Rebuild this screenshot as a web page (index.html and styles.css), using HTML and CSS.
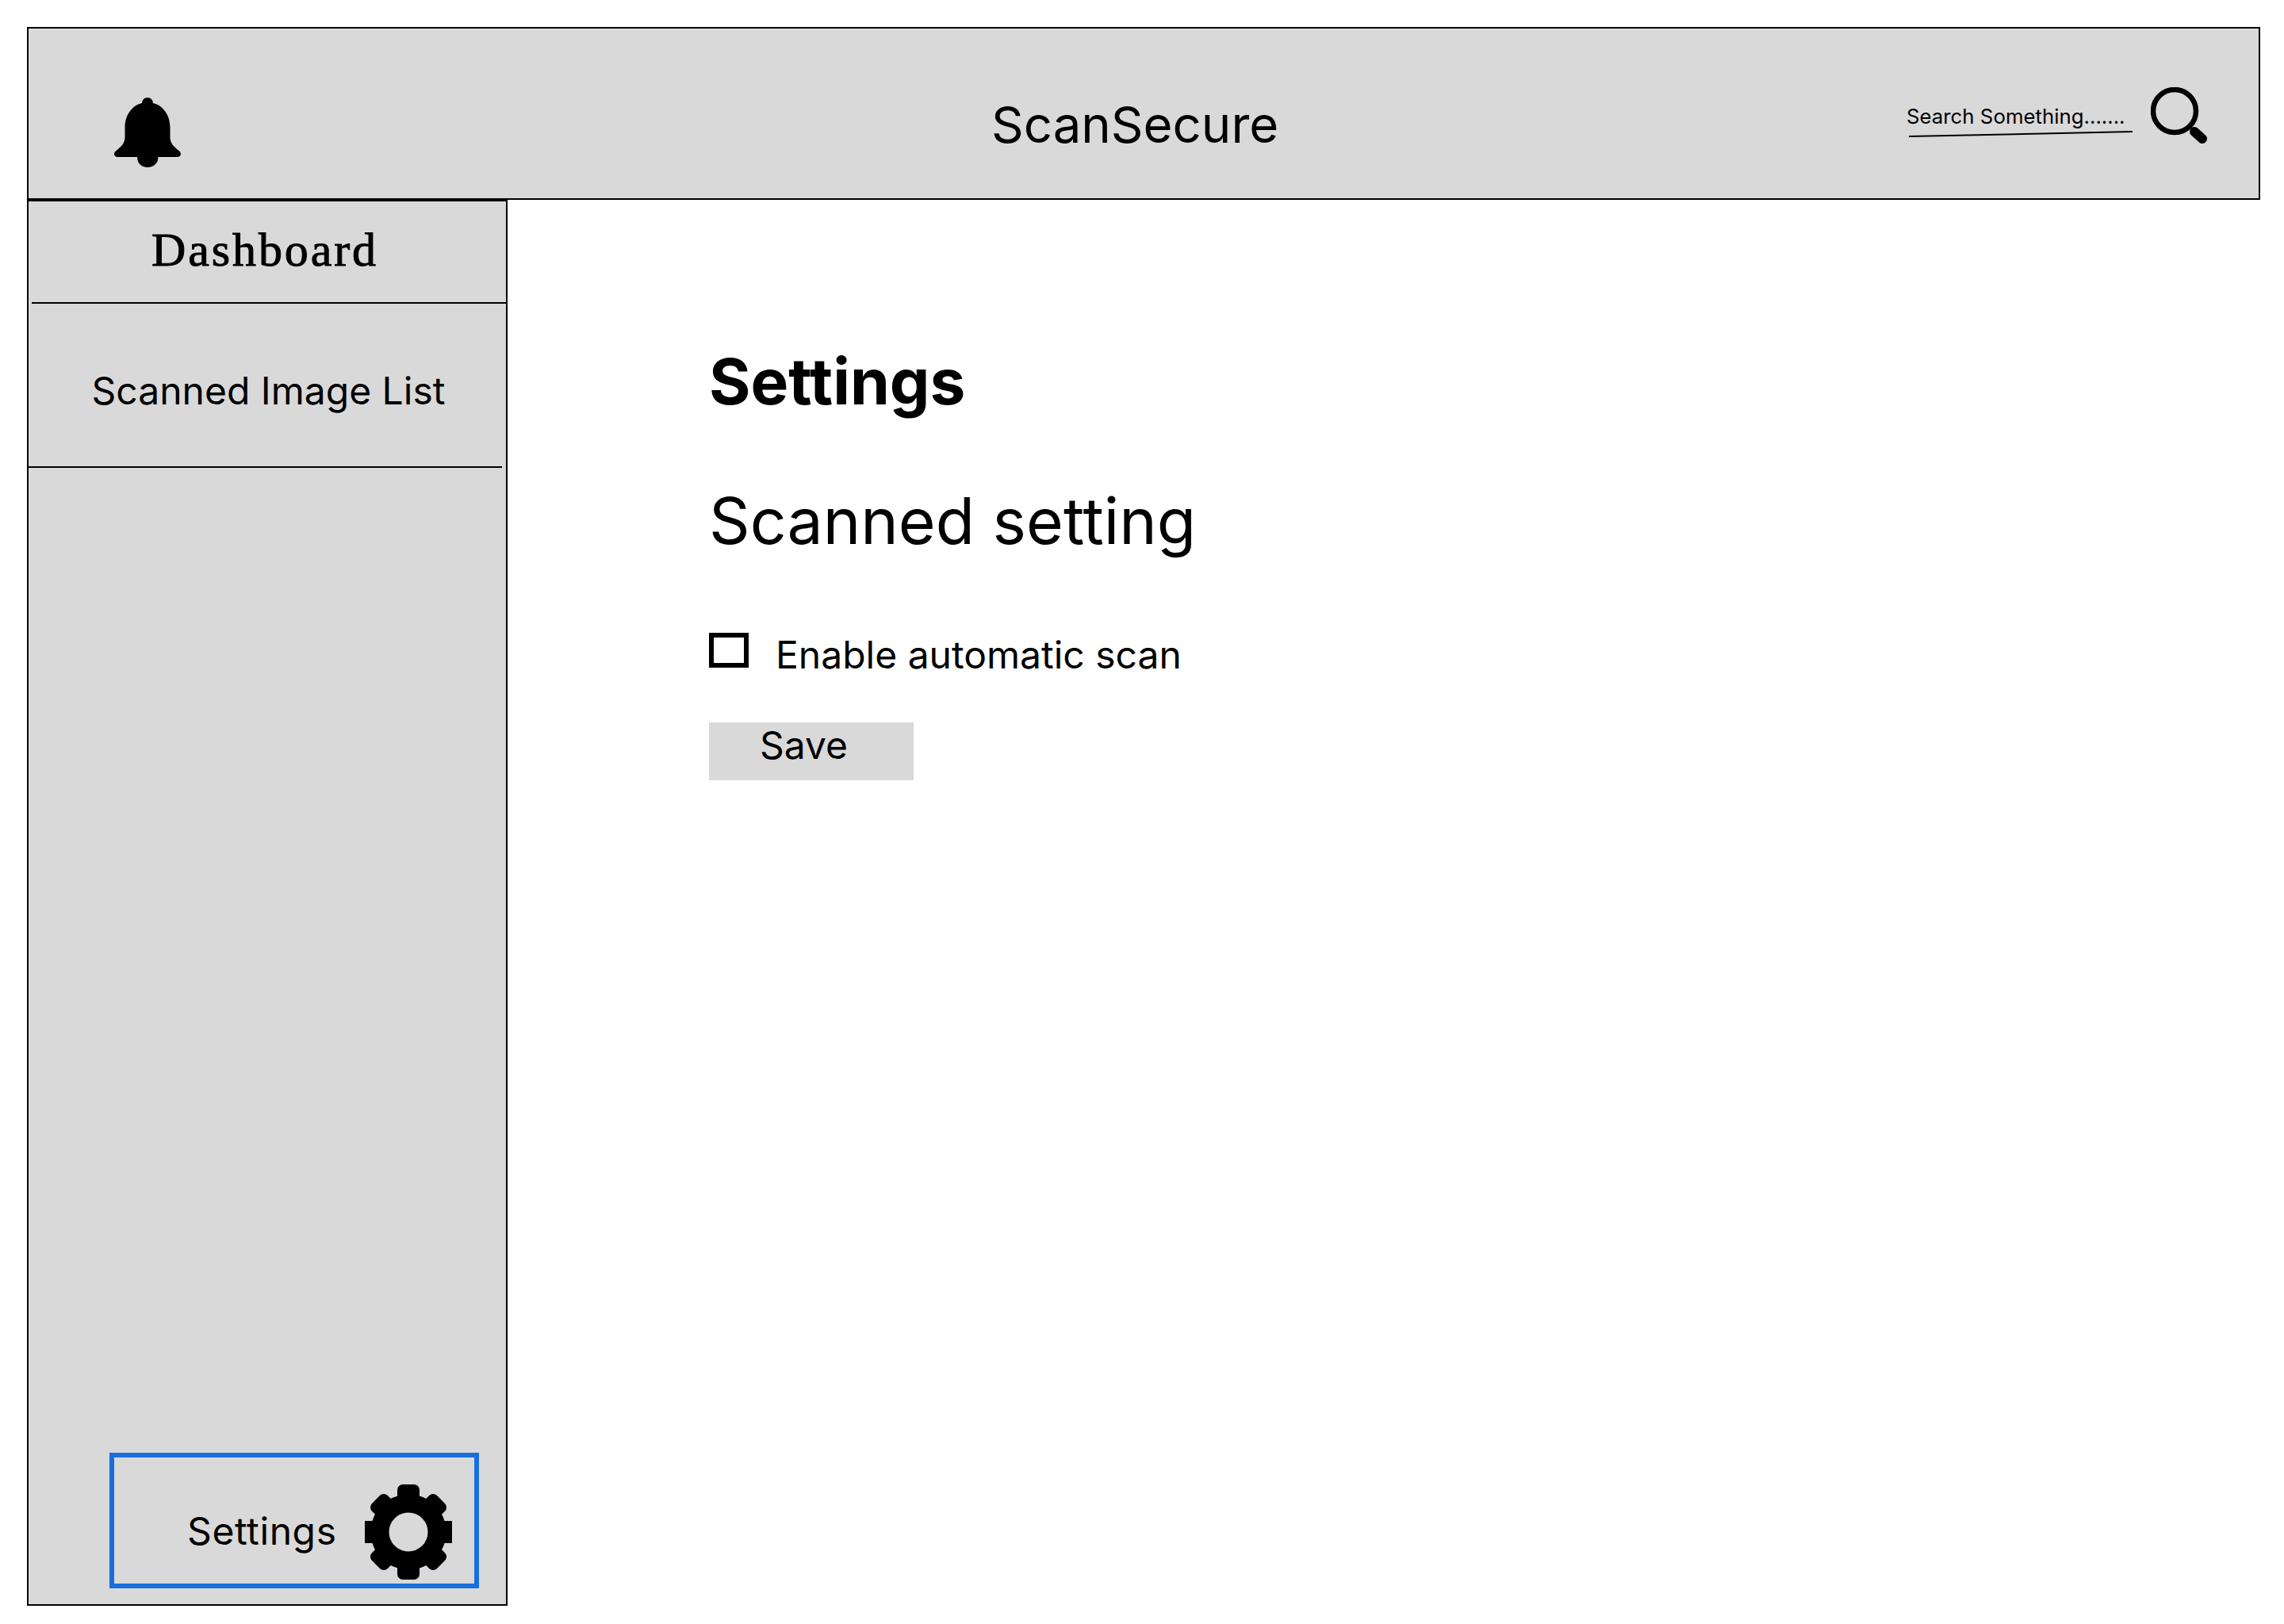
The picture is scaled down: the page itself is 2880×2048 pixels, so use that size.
FILE: index.html
```html
<!doctype html>
<html lang="en">
<head>
  <meta charset="utf-8">
  <title>ScanSecure</title>
  <link rel="stylesheet" href="styles.css">
</head>
<body>
  <div class="app">
    <header class="topbar">
      <svg class="bell" viewBox="0 0 85 88" width="86" height="88">
        <path d="M42.5 0a7 7 0 0 1 7 7C62 10 71 22 71 38V50C71 58 76 62 82 67C86 70 85 75 80 75H56C56 83 50 88 42.5 88C35 88 29.5 83 29.5 75H5C0 75-1 70 3 67C9 62 14 58 14 50V38C14 22 23 10 35.5 7A7 7 0 0 1 42.5 0Z"/>
      </svg>
      <div class="brand">ScanSecure</div>
      <div class="search">
        <div class="search-field">
          <span class="search-text">Search Something.......</span>
          <svg class="search-line" viewBox="0 0 284 8" width="284" height="8">
            <line x1="1" y1="7" x2="283" y2="1" stroke="#000" stroke-width="2"/>
          </svg>
        </div>
        <svg class="search-icon" viewBox="0 0 72 72" width="72" height="72">
          <circle cx="30" cy="30" r="27" fill="none" stroke="#000" stroke-width="6.5"/>
          <line x1="55" y1="56" x2="65" y2="65" stroke="#000" stroke-width="12" stroke-linecap="round"/>
        </svg>
      </div>
    </header>

    <div class="layout">
      <aside class="sidebar">
        <div class="nav-title">Dashboard</div>
        <div class="nav-item">Scanned Image List</div>
        <div class="settings-link">
          <span class="settings-label">Settings</span>
          <svg class="gear" viewBox="-55 -60 110 120" width="110" height="120">
            <circle r="36" fill="none" stroke="#000" stroke-width="23"/>
            <rect x="-14" y="-60" width="28" height="30" rx="7"/>
            <rect x="-14" y="30" width="28" height="30" rx="7"/>
            <rect x="-55" y="-14" width="25" height="28"/>
            <rect x="30" y="-14" width="25" height="28"/>
            <g transform="rotate(45)">
              <rect x="-14" y="-58" width="28" height="28" rx="7"/>
              <rect x="-14" y="30" width="28" height="28" rx="7"/>
            </g>
            <g transform="rotate(-45)">
              <rect x="-14" y="-58" width="28" height="28" rx="7"/>
              <rect x="-14" y="30" width="28" height="28" rx="7"/>
            </g>
          </svg>
        </div>
      </aside>

      <main class="content">
        <h1 class="page-title">Settings</h1>
        <h2 class="section-title">Scanned setting</h2>
        <label class="check-row">
          <span class="checkbox"></span>
          <span>Enable automatic scan</span>
        </label>
        <button class="save-btn" type="button">Save</button>
      </main>
    </div>
  </div>
</body>
</html>
```

FILE: styles.css
```css
* {
  box-sizing: border-box;
}
body {
  margin: 0;
  background-color: #fff;
  color: #000;
  font-family: Inter, "Liberation Sans", sans-serif;
}
svg {
  flex-shrink: 0;
}
.app {
  width: 2816px;
  margin: 34px 0 0 34px;
}
.topbar {
  display: flex;
  height: 218px;
  background-color: #d9d9d9;
  border: 2px solid #000;
}
.bell {
  margin: 87px 0 0 107px;
}
.brand {
  margin: 82px 0 0 1021px;
  font-size: 63.5px;
  line-height: 77px;
}
.search {
  display: flex;
  margin: 0 0 0 auto;
}
.search-field {
  margin: 95px 0 0 0;
}
.search-text {
  display: block;
  margin-left: -2px;
  font-size: 25.8px;
  line-height: 32px;
}
.search-line {
  display: block;
  margin-top: 2px;
}
.search-icon {
  margin: 74px 64px 0 22px;
}
.layout {
  display: flex;
}
.sidebar {
  display: flex;
  flex-direction: column;
  width: 606px;
  height: 1773px;
  background-color: #d9d9d9;
  border: 2px solid #000;
}
.nav-title {
  height: 129px;
  margin-left: 4px;
  padding: 26px 10px 0 0;
  border-bottom: 2px solid #000;
  font-family: "Liberation Serif", serif;
  font-size: 60px;
  line-height: 70px;
  letter-spacing: 2.9px;
  -webkit-text-stroke: 1px #000;
  text-align: center;
}
.nav-item {
  height: 207px;
  margin-right: 5px;
  padding: 81px 0 0 8px;
  border-bottom: 2px solid #000;
  font-size: 48px;
  line-height: 58px;
  text-align: center;
}
.settings-link {
  display: flex;
  height: 171px;
  margin: auto 34px 20px 102px;
  padding: 34px 28px 0 92px;
  border: 6px solid #186fdb;
}
.settings-label {
  margin-top: 30px;
  font-size: 48px;
  line-height: 58px;
  letter-spacing: 0.6px;
}
.gear {
  margin-left: 35px;
}
.content {
  padding: 0 0 0 254px;
}
.page-title {
  margin: 0;
  padding-top: 180px;
  font-size: 80.2px;
  line-height: 97px;
  font-weight: 700;
}
.section-title {
  margin: 0;
  padding-top: 79px;
  font-size: 80.5px;
  line-height: 97px;
  font-weight: 400;
}
.check-row {
  display: flex;
  margin-top: 92px;
  gap: 34px;
  font-size: 48px;
  line-height: 58px;
}
.checkbox {
  width: 50px;
  height: 44px;
  margin-top: 1px;
  border: 6px solid #000;
}
.save-btn {
  display: block;
  width: 258px;
  height: 73px;
  margin-top: 56px;
  padding: 0 0 16px 64px;
  border: none;
  background-color: #d9d9d9;
  color: #000;
  font-family: inherit;
  font-size: 48px;
  line-height: 58px;
  text-align: left;
}
```
